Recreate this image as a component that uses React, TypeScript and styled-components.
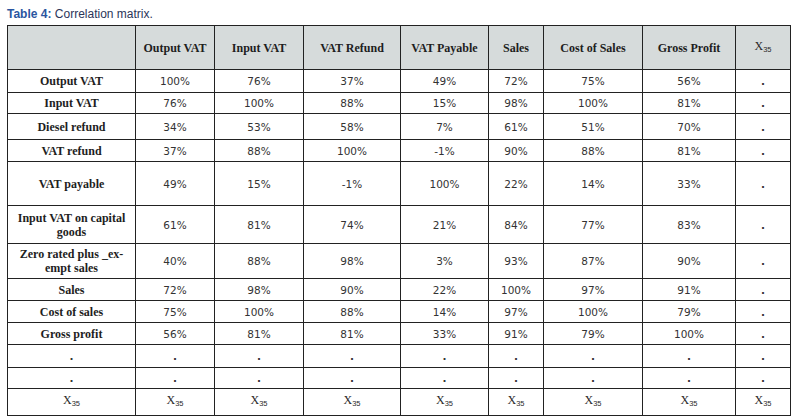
import React from "react";
import styled, { createGlobalStyle } from "styled-components";

const Global = createGlobalStyle`
  html, body { margin: 0; padding: 0; background: #ffffff; }
  body { font-family: "Liberation Sans", Arial, sans-serif; }
`;

const Page = styled.div`
  width: 798px;
  height: 418px;
  padding-left: 7px;
  box-sizing: border-box;
  overflow: hidden;
`;

const Caption = styled.div`
  font-family: "Liberation Sans", Arial, sans-serif;
  font-size: 12px;
  line-height: 14px;
  padding-top: 7px;
  margin-bottom: 4px;
  color: #2b3559;
  white-space: nowrap;
`;

const CaptionLabel = styled.span`
  font-weight: bold;
  color: #2a55a0;
`;

const Table = styled.table`
  border-collapse: collapse;
  table-layout: fixed;
  width: 783px;
  border: 1px solid #222;
`;

const Row = styled.tr<{ $h: number }>`
  height: ${(p) => p.$h}px;
`;

const HeadCell = styled.th`
  background: #d6dbdb;
  border: 1px solid #222;
  font-family: "Liberation Serif", "Times New Roman", serif;
  font-weight: bold;
  font-size: 12px;
  line-height: 14px;
  color: #1e1e1e;
  text-align: center;
  vertical-align: middle;
  padding: 0 4px;
`;

const LabelCell = styled.td`
  border: 1px solid #222;
  font-family: "Liberation Serif", "Times New Roman", serif;
  font-weight: bold;
  font-size: 12px;
  line-height: 14px;
  color: #1e1e1e;
  text-align: center;
  vertical-align: middle;
  padding: 0 4px;
`;

const ValueCell = styled.td<{ $dot?: boolean }>`
  border: 1px solid #222;
  font-family: "DejaVu Sans", Verdana, sans-serif;
  font-size: 10.5px;
  font-weight: ${(p) => (p.$dot ? "bold" : "normal")};
  line-height: 14px;
  color: #333;
  text-align: center;
  vertical-align: middle;
  padding: 0 4px;
`;

const Chi = styled.span`
  font-family: "Liberation Serif", "Times New Roman", serif;
  font-weight: normal;
  font-size: 12px;
  color: #2a2a2a;
  sub {
    font-family: "Liberation Sans", Arial, sans-serif;
    font-size: 7.5px;
    vertical-align: -2px;
  }
`;

const X35 = () => (
  <Chi>
    X<sub>35</sub>
  </Chi>
);

const widths = [128, 79, 89, 97, 88, 55, 99, 93, 55];
const headers = [
  "",
  "Output VAT",
  "Input VAT",
  "VAT Refund",
  "VAT Payable",
  "Sales",
  "Cost of Sales",
  "Gross Profit",
];

type RowData = { label: React.ReactNode; values: string[]; h: number };

const rows: RowData[] = [
  { label: "Output VAT", values: ["100%", "76%", "37%", "49%", "72%", "75%", "56%", "."], h: 23 },
  { label: "Input VAT", values: ["76%", "100%", "88%", "15%", "98%", "100%", "81%", "."], h: 21 },
  { label: "Diesel refund", values: ["34%", "53%", "58%", "7%", "61%", "51%", "70%", "."], h: 26 },
  { label: "VAT refund", values: ["37%", "88%", "100%", "-1%", "90%", "88%", "81%", "."], h: 22 },
  { label: "VAT payable", values: ["49%", "15%", "-1%", "100%", "22%", "14%", "33%", "."], h: 44 },
  { label: "Input VAT on capital goods", values: ["61%", "81%", "74%", "21%", "84%", "77%", "83%", "."], h: 38 },
  {
    label: (
      <>
        Zero rated plus _ex-
        <br />
        empt sales
      </>
    ),
    values: ["40%", "88%", "98%", "3%", "93%", "87%", "90%", "."],
    h: 35,
  },
  { label: "Sales", values: ["72%", "98%", "90%", "22%", "100%", "97%", "91%", "."], h: 22 },
  { label: "Cost of sales", values: ["75%", "100%", "88%", "14%", "97%", "100%", "79%", "."], h: 22 },
  { label: "Gross profit", values: ["56%", "81%", "81%", "33%", "91%", "79%", "100%", "."], h: 22 },
];

const dotHeights = [23, 21];

export default function App() {
  return (
    <Page>
      <Global />
      <Caption>
        <CaptionLabel>Table 4:</CaptionLabel> Correlation matrix.
      </Caption>
      <Table>
        <colgroup>
          {widths.map((w, i) => (
            <col key={i} style={{ width: w }} />
          ))}
        </colgroup>
        <thead>
          <Row $h={44}>
            {headers.map((h, i) => (
              <HeadCell key={i}>{h}</HeadCell>
            ))}
            <HeadCell>
              <X35 />
            </HeadCell>
          </Row>
        </thead>
        <tbody>
          {rows.map((r, i) => (
            <Row $h={r.h} key={i}>
              <LabelCell>{r.label}</LabelCell>
              {r.values.map((v, j) => (
                <ValueCell key={j} $dot={v === "."}>
                  {v}
                </ValueCell>
              ))}
            </Row>
          ))}
          {dotHeights.map((h, i) => (
            <Row $h={h} key={"d" + i}>
              {widths.map((_, j) => (
                <ValueCell key={j} $dot>
                  .
                </ValueCell>
              ))}
            </Row>
          ))}
          <Row $h={27}>
            {widths.map((_, j) => (
              <ValueCell key={j}>
                <X35 />
              </ValueCell>
            ))}
          </Row>
        </tbody>
      </Table>
    </Page>
  );
}
